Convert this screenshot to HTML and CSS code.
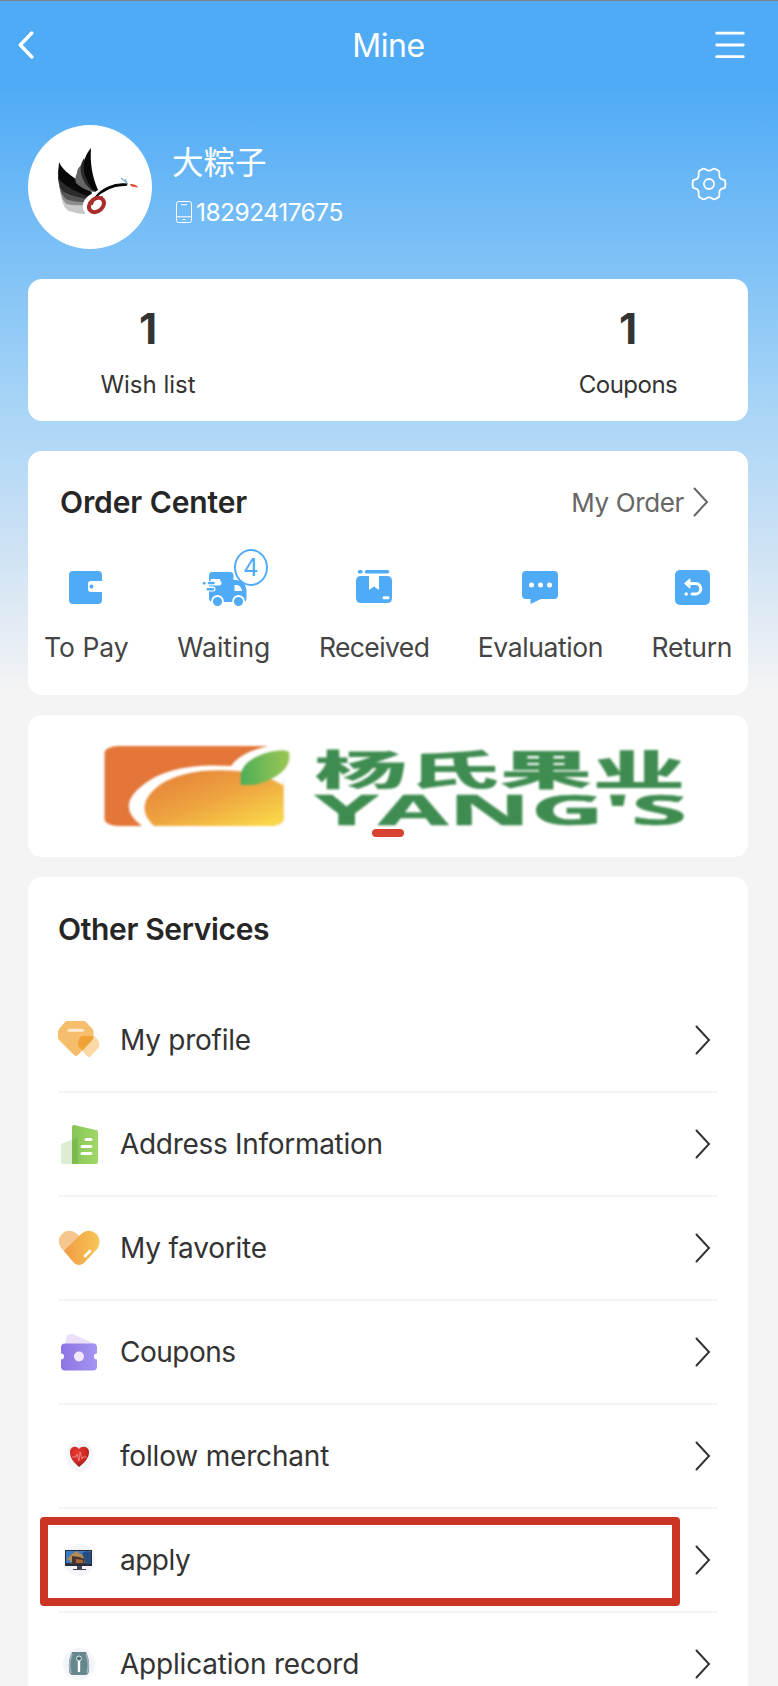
FILE: index.html
```html
<!DOCTYPE html>
<html lang="en">
<head>
<meta charset="utf-8">
<title>Mine</title>
<link rel="stylesheet" href="styles.css">
</head>
<body>
<svg width="0" height="0" class="defs">
  <defs>
    <symbol id="chev" viewBox="0 0 16 30"><path d="M1.5 1.5 14 15 1.5 28.5" fill="none" stroke="currentColor" stroke-width="2" stroke-linecap="round" stroke-linejoin="miter"/></symbol>
  </defs>
</svg>
<div class="page">
  <header class="topbar">
    <svg class="back" width="16" height="28" viewBox="0 0 16 28"><path d="M13.8 2 2.3 14 13.8 26" fill="none" stroke="#fff" stroke-width="3.4" stroke-linecap="round" stroke-linejoin="round"/></svg>
    <h1 class="title">Mine</h1>
    <svg class="menu" width="30" height="28" viewBox="0 0 30 28"><path d="M1.7 2.2h26.6M1.7 14h26.6M1.7 25.7h26.6" stroke="#fff" stroke-width="2.8" stroke-linecap="round"/></svg>
  </header>

  <section class="profile">
    <div class="avatar">
      <svg width="124" height="124" viewBox="0 0 124 124">
        <path d="M33 72c2 8 4 12 8 14 6 2 11 3 16 3 0-8 3-12 6-16Z" fill="#c9c9c9"/>
        <path d="M32 66c2 8 4 11 7 13 7 2 13 1 19 1l6-10Z" fill="#8d8d8d"/>
        <path d="M31 60c1 7 4 11 7 14 7 3 15 3 21 3l5-8Z" fill="#555"/>
        <path d="M30 51c0 7 2 13 6 16 8 4 17 6 24 7l4-6Z" fill="#2b2b2b"/>
        <path d="M31 37c0 6-2 11 0 17 8 9 19 13 28 17l5-3C58 57 38 52 31 37Z" fill="#080808"/>
        <path d="M54 37c0 4-5 5-5 11-2 4-2 7-1 10 4 4 11 8 18 9Z" fill="#666"/>
        <path d="M56 33c-3 5-4 10-3 15 2 9 7 15 13 19Z" fill="#2b2b2b"/>
        <path d="M63 23c-6 7-8 14-7 23 2 9 6 16 11 21l3-2C64 51 62 38 63 23Z" fill="#080808"/>
        <ellipse cx="67" cy="79" rx="13" ry="10.500" transform="rotate(-35 67 79)" fill="#fff"/>
        <path d="M66 74C72 64 86 57.500 99 59l-1 1.500C87 60 75 65 66 74Z" fill="#080808" stroke="#080808" stroke-width="1.200"/>
        <ellipse cx="68.500" cy="80" rx="8.300" ry="6.200" transform="rotate(-40 68.500 80)" fill="none" stroke="#a92d2b" stroke-width="4"/>
        <path d="M64 80c1-5 5-8 11-8" fill="none" stroke="#a92d2b" stroke-width="1.600"/>
        <path d="M93 53l6 5M97 54l2 4" stroke="#7fb2d4" stroke-width="1.200"/>
        <path d="M102.500 59.500c3 0 6 1 7 2.500l-6-1Z" fill="#df5237" stroke="#df5237"/>
      </svg>
    </div>
    <div class="who">
      <div class="name">大粽子</div>
      <div class="phone">
        <svg width="16" height="22" viewBox="0 0 16 22" fill="none" stroke="#fff" stroke-width="1"><rect x=".5" y=".5" width="15" height="21" rx="2"/><path d="M5 3.800h6M.5 15.800h15M6.500 18.600h3"/></svg>
        <span>18292417675</span>
      </div>
    </div>
    <svg class="gear" width="36" height="34" viewBox="0 0 36 34" fill="none" stroke="#fff" stroke-width="1.800" stroke-linejoin="round"><path d="M8.300 3.900 12 1.800C14.500 1 15 3.600 18 3.600S21.500 1 24 1.800L27.700 3.900C29.300 6 27.600 8 28.700 10.300S31.500 12.200 34 13.300C34.700 16 34.700 18 34 20.700 31.500 21.800 29.800 21.400 28.700 23.700S29.300 28 27.700 30.100L24 32.200C21.500 33 21 30.400 18 30.400S14.500 33 12 32.200L8.300 30.100C6.700 28 8.400 26 7.300 23.700S4.500 21.800 2 20.700C1.300 18 1.300 16 2 13.300 4.500 12.200 6.200 12.600 7.300 10.300S6.700 6 8.300 3.900Z"/><circle cx="18" cy="17" r="5"/></svg>
  </section>

  <section class="card stats">
    <div class="stat"><b class="num">1</b><span class="stat-label wish">Wish list</span></div>
    <div class="stat"><b class="num">1</b><span class="stat-label coup">Coupons</span></div>
  </section>

  <section class="card orders">
    <div class="orders-head">
      <h2 class="heading center">Order Center</h2>
      <div class="more"><span>My Order</span><svg width="16" height="30"><use href="#chev"/></svg></div>
    </div>
    <div class="tabs">
      <div class="tab">
        <svg width="44" height="38" viewBox="0 0 44 38"><path d="M9 3h25a4 4 0 0 1 4 4v6H27q-3 0-3 3v5q0 3 3 3h11v8a4 4 0 0 1-4 4H9a4 4 0 0 1-4-4V7a4 4 0 0 1 4-4Z" fill="#50abf6"/><circle cx="27.500" cy="18.600" r="2" fill="#50abf6"/></svg>
        <span class="l1">To Pay</span>
      </div>
      <div class="tab">
        <div class="iconbox">
          <svg width="46" height="40" viewBox="0 0 46 40"><path d="M11 4h18q3.500 0 3.500 3.500V12h3q9 1 10 10v8q0 4-3 4H12q-4 0-4-4V8q0-4 3-4Z" fill="#50abf6"/><path d="M33.500 17h2.500q4.500 1 5 6h-7.500Z" fill="#fff"/><path d="M6 15h12M5 21h7" stroke="#fff" stroke-width="5" stroke-linecap="round"/><path d="M8 11.600h11v1H8Z" fill="#50abf6"/><path d="M3 15.200h.5M8 15h4.500M6.800 21.200h5" stroke="#50abf6" stroke-width="2.600" stroke-linecap="round"/><path d="M10.500 12h8" stroke="#fff" stroke-width="1.800" stroke-linecap="round"/><circle cx="16.500" cy="33.500" r="5.500" fill="#50abf6" stroke="#fff" stroke-width="1.800"/><circle cx="37.500" cy="33.500" r="5.500" fill="#50abf6" stroke="#fff" stroke-width="1.800"/></svg>
          <i class="badge">4</i>
        </div>
        <span class="l2">Waiting</span>
      </div>
      <div class="tab">
        <svg width="38" height="38" viewBox="0 0 38 38"><path d="M4.500 3.800h1.500M11.500 3.800h21" stroke="#50abf6" stroke-width="3.600" stroke-linecap="round"/><path d="M6 8h8v14l5-3.500 5 3.500V8h8q5 0 5 5v17q0 5-5 5H6q-5 0-5-5V13q0-5 5-5Z" fill="#50abf6"/><path d="M29 29.800h4" stroke="#fff" stroke-width="3" stroke-linecap="round"/></svg>
        <span class="l3">Received</span>
      </div>
      <div class="tab">
        <svg width="38" height="38" viewBox="0 0 38 38"><path d="M5 3h28q4 0 4 4v20q0 4-4 4H20L9.500 36v-5H5q-4 0-4-4V7q0-4 4-4Z" fill="#50abf6"/><g fill="#fff"><circle cx="10.500" cy="17" r="2.500"/><circle cx="19.500" cy="17" r="2.500"/><circle cx="28.500" cy="17" r="2.500"/></g></svg>
        <span class="l4">Evaluation</span>
      </div>
      <div class="tab">
        <svg width="38" height="38" viewBox="0 0 38 38"><rect x="2" y="2" width="35" height="35" rx="5" fill="#50abf6"/><path d="M15 15.500h7.500a5.300 5.300 0 0 1 0 10.600H19" fill="none" stroke="#fff" stroke-width="3" stroke-linecap="round"/><path d="M11.500 15.500 17 10.800v9.400Z" fill="#fff" stroke="#fff" stroke-linejoin="round"/><circle cx="13.200" cy="26" r="1.700" fill="#fff"/></svg>
        <span class="l5">Return</span>
      </div>
    </div>
  </section>

  <section class="card banner">
    <svg width="720" height="142" viewBox="0 0 720 142">
      <defs>
        <linearGradient id="or" x1="0" y1="0" x2="1" y2="1"><stop offset="0" stop-color="#e37a37"/><stop offset=".5" stop-color="#eea440"/><stop offset="1" stop-color="#fbdf4a"/></linearGradient>
        <linearGradient id="lf"><stop offset="0" stop-color="#4eae58"/><stop offset="1" stop-color="#9bc653"/></linearGradient>
        <clipPath id="lg"><rect x="76.500" y="31" width="179" height="80" rx="14" ry="7"/></clipPath>
      </defs>
      <g class="soft">
        <g clip-path="url(#lg)">
          <rect x="76" y="31" width="180" height="80" fill="#e37638"/>
          <path d="M256 31h-16q-27 6-37 20-60-4-88 19-28 21-1 41h30L256 100Z" fill="#fff"/>
          <path d="M258 72q-18-12-48-16-50-4-77 13-29 21-7 42h132Z" fill="url(#or)"/>
        </g>
        <path d="M242 31q16-5 20 1v36q-14-7-29-10l-21-4q7-13 30-23Z" fill="#fff"/>
        <path d="M213 70q-5-23 25-32 18-5 23-1 3 16-16 26-15 8-26 7Z" fill="url(#lf)"/>
        <text class="brand-cn" transform="translate(286 70) scale(2.250 1)" textLength="165" lengthAdjust="spacingAndGlyphs">杨氏果业</text>
        <text class="brand-en" transform="translate(287 110) scale(2 1)" textLength="186" lengthAdjust="spacingAndGlyphs">YANG'S</text>
      </g>
      <rect x="344" y="114" width="32" height="8" rx="4" fill="#d84331"/>
    </svg>
  </section>

  <section class="card services">
    <h2 class="heading other">Other Services</h2>
    <div class="row">
      <svg width="42" height="42" viewBox="0 0 42 42"><path d="M9.500 2h16q1.500 0 2.500 1l6 6.500q1.500 1.500 1.500 3.500v5q0 2-1.500 3.500L20 36q-2 2-4 0L1.500 21.500Q0 20 0 18v-5q0-2 1.500-3.500L7 3q1-1 2.500-1Z" fill="#f6bd6d"/><path d="M24 17h12q5 4 5.500 8 0 3-2 5l-7 7.500q-1.500 1.500-3 0L21.500 29Q18 25 21 20q1-3 3-3Z" fill="#fbd9a7"/><path d="M24 17h11.500q0 3-1.500 4.500L24.500 31.500 21.500 29Q18 25 21 20q1-3 3-3Z" fill="#efa336"/><path d="M11 11.200h13.500" stroke="#fdebd1" stroke-width="3" stroke-linecap="round"/></svg>
      <span class="s1">My profile</span><svg class="go" width="16" height="30"><use href="#chev"/></svg>
    </div>
    <div class="row">
      <svg width="42" height="42" viewBox="0 0 42 42"><defs><linearGradient id="gr"><stop stop-color="#86c557"/><stop offset="1" stop-color="#a1d766"/></linearGradient></defs><path d="M3 21 20 14v27H5q-2 0-2-2Z" fill="#dcedd2"/><path d="M14 4q0-2 2-2l22 5q2 0 2 2v30q0 2-2 2H14Z" fill="url(#gr)"/><path d="M14 17l6-3v27h-6Z" fill="#7cbb50"/><path d="M28 16.500h5M24 23.500h9M24 30.500h9" stroke="#fff" stroke-width="3" stroke-linecap="round"/></svg>
      <span class="s2">Address Information</span><svg class="go" width="16" height="30"><use href="#chev"/></svg>
    </div>
    <div class="row">
      <svg width="42" height="42" viewBox="0 0 42 42"><defs><linearGradient id="ht"><stop stop-color="#f19b43"/><stop offset="1" stop-color="#f7c657"/></linearGradient></defs><path d="M21 9C15 2 8 3 4 7s-5 10 1 16l12 11L30 18Z" fill="#f5c68e"/><path d="M6 24 23 7q7-6 14-1t3 15L26 36q-5 4-10 0Z" fill="url(#ht)"/><path d="m27 29 5-5" stroke="#fff" stroke-width="2.600" stroke-linecap="round"/></svg>
      <span class="s3">My favorite</span><svg class="go" width="16" height="30"><use href="#chev"/></svg>
    </div>
    <div class="row">
      <svg width="42" height="42" viewBox="0 0 42 42"><defs><linearGradient id="tk"><stop stop-color="#8c74e2"/><stop offset="1" stop-color="#a595f1"/></linearGradient></defs><path d="M7.500 16V9q1-7 7-6l23 10v3Z" fill="#ecdff9"/><path d="M7 12.500h28q4 0 4 4v6a3 3 0 0 0 0 6v7q0 4-4 4H7q-4 0-4-4v-7a3 3 0 0 0 0-6v-6q0-4 4-4Z" fill="url(#tk)"/><circle cx="21" cy="25.500" r="5" fill="#f3e8fc"/></svg>
      <span class="s4">Coupons</span><svg class="go" width="16" height="30"><use href="#chev"/></svg>
    </div>
    <div class="row">
      <svg width="42" height="42" viewBox="0 0 42 42"><defs><radialGradient id="rh" cx=".4" cy=".3" r=".75"><stop stop-color="#e83a31"/><stop offset=".6" stop-color="#cf2824"/><stop offset="1" stop-color="#841915"/></radialGradient></defs><ellipse cx="21.500" cy="21" rx="13.500" ry="16" fill="#f4f5f8"/><path d="M21 14c-3-4-9-2-9 3 0 7 4 10 9 15 6-5 10-9 10-15 0-5-7-7-10-3Z" fill="url(#rh)"/><path d="M14 22h4l1-3 2 7 1-9 2 7 1-2h4" fill="none" stroke="#f0a29e" stroke-width=".7"/></svg>
      <span class="s5">follow merchant</span><svg class="go" width="16" height="30"><use href="#chev"/></svg>
    </div>
    <div class="row marked">
      <svg width="42" height="42" viewBox="0 0 42 42"><circle cx="21.500" cy="21" r="16" fill="#f4f5f8"/><path d="M7 11h27v16H7Z" fill="#292c39"/><path d="M8 12h25v10l-9 3-16-1Z" fill="#397cc0"/><path d="m9 20 5-5 5-3 3 3 5 1v8H15Z" fill="#b58a53"/><path d="m24 14 5-2 4 1v12h-5Z" fill="#254d82"/><path d="m14 17 7 1 6 2-1 5H14Z" fill="#49352f"/><path d="m18 20 7 1v3h-7Z" fill="#a56839"/><path d="M19 27h5v3h4v1H15v-1h4Z" fill="#444750"/></svg>
      <span class="s6">apply</span><svg class="go" width="16" height="30"><use href="#chev"/></svg>
    </div>
    <div class="row">
      <svg width="42" height="42" viewBox="0 0 42 42"><circle cx="21" cy="21" r="16" fill="#f4f5f8"/><path d="M14 9h14q4 8 3 18 0 5-4 5H15q-4 0-4-5-1-10 3-18Z" fill="#67878e"/><path d="M14 11q-4 10-1 19M28 11q4 10 1 19" fill="none" stroke="#9fb7bb" stroke-width="1.500"/><path d="M21 18v10" stroke="#fff" stroke-width="2.400" stroke-linecap="round"/><circle cx="21" cy="15.500" r="2.500" fill="#4c6b73" stroke="#e5eded"/></svg>
      <span class="s7">Application record</span><svg class="go" width="16" height="30"><use href="#chev"/></svg>
    </div>
  </section>
</div>
</body>
</html>
```
FILE: styles.css
```css
*, *::after { box-sizing: border-box; }
body { margin: 0; background: #f4f4f4; font-family: Inter, "Noto Sans CJK SC", sans-serif; color: #333; }
svg { display: block; flex: none; }
.defs { position: absolute; }
.page { height: 1686px; overflow: hidden; border-top: 1px solid #808386; background: linear-gradient(#50abf6 0, #50abf6 88px, #84c4f6 280px, #a9d5f6 410px, #c9e0f5 530px, #f4f4f4 692px); }
.topbar { height: 88px; padding: 0 33px 0 18px; display: flex; align-items: center; }
.title { flex: 1; margin: 0; padding-left: 28px; text-align: center; font-size: 32px; font-weight: 400; letter-spacing: -.4px; color: #fff; }
.profile { height: 190px; padding: 36px 51px 30px 28px; display: flex; }
.avatar { width: 124px; height: 124px; border-radius: 50%; background: #fff; overflow: hidden; }
.who { margin-left: 20px; flex: 1; color: #fff; }
.name { margin-top: 11px; font: 31.500px/48px "Noto Sans CJK SC", sans-serif; }
.phone { margin-top: 11px; padding-left: 4px; display: flex; align-items: center; gap: 4px; font-size: 24.500px; line-height: 34px; letter-spacing: -.5px; }
.gear { margin-top: 42px; }
.card { margin: 0 30px 0 28px; background: #fff; border-radius: 14px; }
.stats { height: 142px; display: flex; justify-content: space-between; }
.stat { width: 240px; display: flex; flex-direction: column; align-items: center; }
.num { margin-top: 24px; font-size: 42px; line-height: 52px; font-weight: 700; }
.stat-label { margin-top: 14px; font-size: 24px; line-height: 32px; }
.coup { letter-spacing: -.5px; }
.orders { margin-top: 30px; height: 244px; padding-top: 29px; }
.orders-head { height: 44px; padding: 0 39px 0 32px; display: flex; align-items: center; justify-content: space-between; }
.heading { margin: 0; font-size: 30px; line-height: 44px; font-weight: 600; color: #262626; }
.center { letter-spacing: -.1px; }
.more { display: flex; align-items: center; gap: 9px; font-size: 26px; letter-spacing: -.35px; color: #666; }
.tabs { margin-top: 44px; padding: 0 16px; display: flex; justify-content: space-between; }
.tab { display: flex; flex-direction: column; align-items: center; font-size: 26.500px; line-height: 34px; color: #444; }
.tab span { margin-top: 24px; }
.l3 { letter-spacing: -.6px; }
.l4 { letter-spacing: -.4px; }
.l5 { letter-spacing: -.35px; }
.iconbox { position: relative; height: 38px; }
.badge { position: absolute; left: 33px; top: -19px; width: 34px; height: 37px; border: 2px solid #50abf6; border-radius: 50%; background: #fff; color: #50abf6; font-size: 24px; line-height: 34px; font-style: normal; text-align: center; }
.banner { margin-top: 20px; height: 142px; }
.soft { filter: blur(.8px); }
.brand-cn { font: 900 41px "Noto Sans CJK SC", sans-serif; fill: #3f8c50; }
.brand-en { font: 700 41px "Open Sans", sans-serif; fill: #3f8c50; stroke: #3f8c50; stroke-width: .6px; }
.services { margin-top: 20px; height: 900px; padding: 30px 30px 0; }
.other { height: 82px; letter-spacing: -.35px; }
.row { position: relative; height: 104px; padding-right: 7px; border-bottom: 2px solid #f4f4f4; display: flex; align-items: center; font-size: 28px; }
.row span { margin-left: 20px; flex: 1; }
.s1 { letter-spacing: -.25px; }
.s2 { letter-spacing: -.3px; }
.s3 { letter-spacing: -.22px; }
.s4 { letter-spacing: -.5px; }
.s5 { letter-spacing: -.18px; }
.s6 { letter-spacing: -.5px; }
.s7 { letter-spacing: -.2px; }
.marked::after { content: ""; position: absolute; left: -18px; top: 8px; width: 640px; height: 89px; border: 8px solid #cb3322; border-radius: 4px; }
```
